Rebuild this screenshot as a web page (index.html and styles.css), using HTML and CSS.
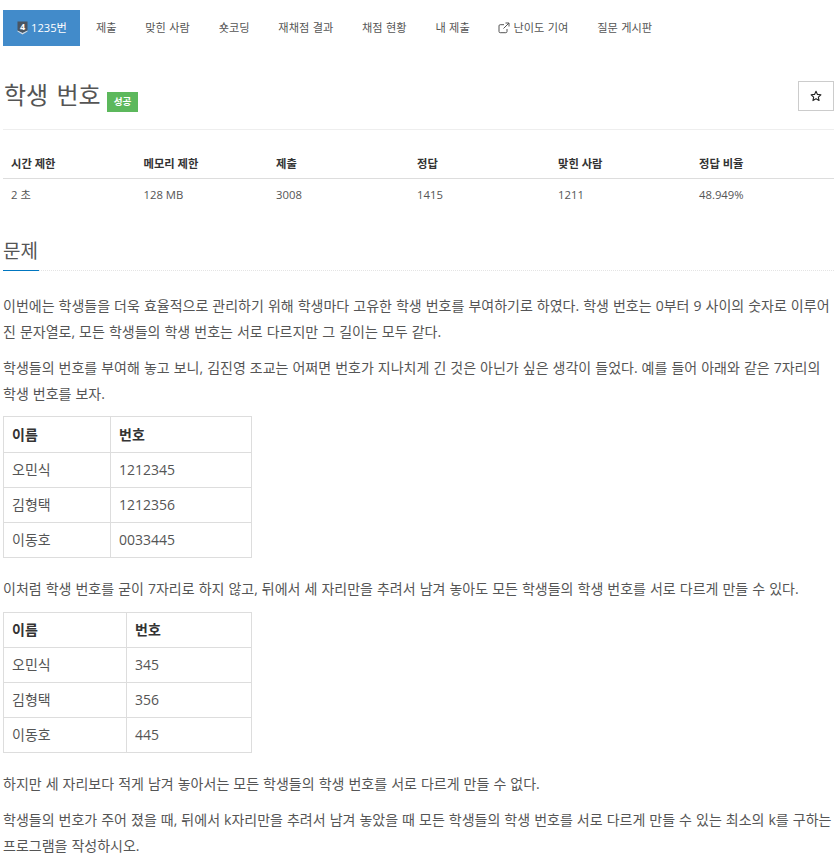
FILE: index.html
```html
<!DOCTYPE html>
<html lang="ko">
<head>
<meta charset="utf-8">
<title>학생 번호</title>
<link rel="stylesheet" href="styles.css">
</head>
<body>
<div class="container">
  <ul class="nav">
    <li class="nav-item active"><a>
      <svg class="tier" width="11" height="14" viewBox="0 0 11 14"><path d="M0.500 0.500h10v9l-5 2.500-5-2.500z" fill="#4a5561"/><path d="M0.500 10.500l5 3 5-3v-1l-5 2.500-5-2.500z" fill="#d5dbe0"/><text x="5.500" y="9" text-anchor="middle" class="tier-num">4</text></svg>
      1235번</a></li>
    <li class="nav-item"><a>제출</a></li>
    <li class="nav-item"><a>맞힌 사람</a></li>
    <li class="nav-item"><a>숏코딩</a></li>
    <li class="nav-item"><a>재채점 결과</a></li>
    <li class="nav-item"><a>채점 현황</a></li>
    <li class="nav-item"><a>내 제출</a></li>
    <li class="nav-item"><a>
      <svg class="ext" width="12" height="12" viewBox="0 0 12 12"><path d="M9 7v2.500A1.200 1.200 0 0 1 7.800 10.700H2.200A1.200 1.200 0 0 1 1 9.500V3.900A1.200 1.200 0 0 1 2.200 2.700H6M7.500 1h3.500v3.500M11 1L5.500 6.500" fill="none" stroke="#555" stroke-width="1"/></svg>
      난이도 기여</a></li>
    <li class="nav-item"><a>질문 게시판</a></li>
  </ul>

  <div class="page-header">
    <h1 class="title">학생 번호 <span class="label">성공</span></h1>
    <button class="star-btn" type="button" aria-label="즐겨찾기">
      <svg width="12" height="12" viewBox="0 0 24 24"><path d="M12 2.500l2.900 6.300 6.900.8-5.100 4.700 1.400 6.800L12 17.700l-6.100 3.400 1.400-6.800L2.200 9.600l6.900-.8z" fill="none" stroke="#222" stroke-width="2.200" stroke-linejoin="round"/></svg>
    </button>
  </div>

  <table class="info">
    <colgroup>
      <col class="c1"><col class="c1"><col class="c2"><col class="c2"><col class="c2"><col>
    </colgroup>
    <thead>
      <tr><th>시간 제한</th><th>메모리 제한</th><th>제출</th><th>정답</th><th>맞힌 사람</th><th>정답 비율</th></tr>
    </thead>
    <tbody>
      <tr><td>2 초</td><td>128 MB</td><td>3008</td><td>1415</td><td>1211</td><td>48.949%</td></tr>
    </tbody>
  </table>

  <section class="problem">
    <div class="headline"><h2>문제</h2></div>
    <p>이번에는 학생들을 더욱 효율적으로 관리하기 위해 학생마다 고유한 학생 번호를 부여하기로 하였다. 학생 번호는 0부터 9 사이의 숫자로 이루어진 문자열로, 모든 학생들의 학생 번호는 서로 다르지만 그 길이는 모두 같다.</p>
    <p>학생들의 번호를 부여해 놓고 보니, 김진영 조교는 어쩌면 번호가 지나치게 긴 것은 아닌가 싶은 생각이 들었다. 예를 들어 아래와 같은 7자리의 학생 번호를 보자.</p>
    <table class="data first">
      <thead><tr><th>이름</th><th>번호</th></tr></thead>
      <tbody>
        <tr><td>오민식</td><td>1212345</td></tr>
        <tr><td>김형택</td><td>1212356</td></tr>
        <tr><td>이동호</td><td>0033445</td></tr>
      </tbody>
    </table>
    <p>이처럼 학생 번호를 굳이 7자리로 하지 않고, 뒤에서 세 자리만을 추려서 남겨 놓아도 모든 학생들의 학생 번호를 서로 다르게 만들 수 있다.</p>
    <table class="data second">
      <thead><tr><th>이름</th><th>번호</th></tr></thead>
      <tbody>
        <tr><td>오민식</td><td>345</td></tr>
        <tr><td>김형택</td><td>356</td></tr>
        <tr><td>이동호</td><td>445</td></tr>
      </tbody>
    </table>
    <p>하지만 세 자리보다 적게 남겨 놓아서는 모든 학생들의 학생 번호를 서로 다르게 만들 수 없다.</p>
    <p>학생들의 번호가 주어 졌을 때, 뒤에서 k자리만을 추려서 남겨 놓았을 때 모든 학생들의 학생 번호를 서로 다르게 만들 수 있는 최소의 k를 구하는 프로그램을 작성하시오.</p>
  </section>
</div>
</body>
</html>
```

FILE: styles.css
```css
* { box-sizing: border-box; }
html, body { margin: 0; padding: 0; background: #fff; }
body {
  font-family: "Open Sans", "Noto Sans CJK KR", sans-serif;
  font-size: 14px;
  color: #555;
  overflow: hidden;
}
.container { width: 831px; margin-left: 3px; padding-top: 10px; }

.nav { list-style: none; margin: 0; padding: 0; display: flex; height: 36px; }
.nav-item a {
  display: flex; align-items: center; gap: 3px;
  height: 36px; padding: 0 12.8px 0 16px;
  font-size: 11.2px; line-height: 16px; word-spacing: 0.5px; color: #555;
}
.nav-item.active a { background: #428bca; color: #fff; padding: 0 13px 0 14px; }
.tier { display: block; }
.tier-num { font: 700 9px "Open Sans", sans-serif; fill: #fff; }

.page-header {
  display: flex; justify-content: space-between; align-items: flex-start;
  height: 84px; padding-top: 35px;
  border-bottom: 1px solid #eee;
}
.title { margin: -1px 0 0; padding-left: 1px; font-size: 24px; line-height: 30px; font-weight: 400; word-spacing: 2px; color: #555; }
.label {
  display: inline-block; vertical-align: -1px; margin-left: -2px;
  height: 20px; padding: 0 7px;
  background: #5cb85c; color: #fff;
  font-size: 9.6px; font-weight: 700; line-height: 20px;
}
.star-btn {
  width: 36px; height: 30px; padding: 0;
  display: flex; align-items: center; justify-content: center;
  background: #fff; border: 1px solid #ccc;
}

.info { width: 100%; margin-top: 19px; border-collapse: collapse; table-layout: fixed; font-size: 11.3px; color: #555; }
.c1 { width: 132.5px; }
.c2 { width: 141px; }
.info th { padding: 8px; height: 28px; line-height: 13px; text-align: left; font-weight: 700; color: #333; border-bottom: 1px solid #ddd; }
.info td { padding: 8px; height: 31px; line-height: 15px; text-align: left; }

.headline { margin-top: 25px; height: 36px; border-bottom: 1px dotted #e4e4e4; }
.headline h2 {
  display: block; width: 36px; margin: 0; height: 36px;
  font-size: 19px; line-height: 33px; font-weight: 400; white-space: nowrap; color: #555;
  border-bottom: 1px solid #0076c0;
}
.problem p { margin: 0 0 10px; font-size: 14px; line-height: 26px; word-spacing: 0.4px; color: #555; }
.headline + p { margin-top: 22px; }

.data { width: 249px; border-collapse: collapse; margin-bottom: 18px; table-layout: fixed; font-size: 14px; color: #555; }
.data.first { margin-top: -1px; }
.data th, .data td { border: 1px solid #ddd; padding: 0 8px; text-align: left; line-height: 20px; }
.data th { height: 36px; font-weight: 700; color: #333; }
.data td { height: 35px; }
.first th:first-child { width: 107px; }
.second th { height: 35px; }
.second th:first-child { width: 123px; }
```
